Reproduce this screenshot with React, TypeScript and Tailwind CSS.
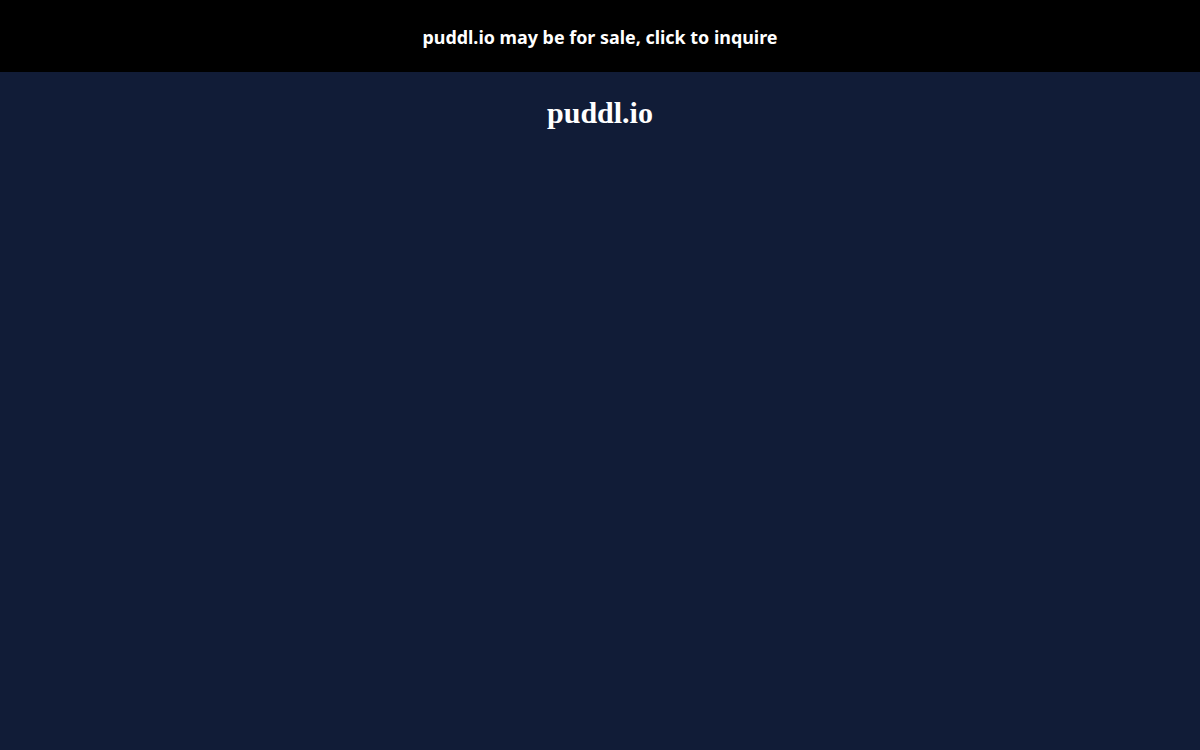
export default function App() {
  return (
    <div className="min-h-screen bg-[#111c37]">
      <div className="flex h-[72px] items-center justify-center bg-black pt-[2px]">
        <span className="text-[17.9px] font-bold text-white" style={{ fontFamily: '"Noto Sans", sans-serif' }}>
          puddl.io may be for sale, click to inquire
        </span>
      </div>
      <h1 className="pt-[21px] text-center text-[30px] font-bold leading-[40px] text-white" style={{ fontFamily: '"Liberation Serif", serif' }}>
        puddl.io
      </h1>
    </div>
  );
}
